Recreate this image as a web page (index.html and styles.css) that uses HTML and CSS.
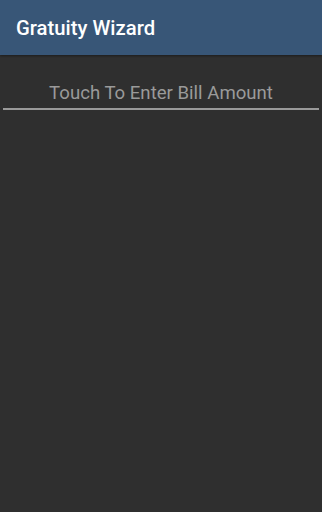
FILE: index.html
```html
<!DOCTYPE html>
<html>
<head>
<meta charset="utf-8">
<link rel="stylesheet" href="styles.css">
</head>
<body>
<header class="appbar"><h1 class="title">Gratuity Wizard</h1></header>
<main class="content">
  <div class="bill-field">Touch To Enter Bill Amount</div>
</main>
</body>
</html>
```
FILE: styles.css
```css
html, body { margin: 0; padding: 0; height: 100%; }
body { background: #2f2f2f; font-family: Roboto, "Noto Sans", sans-serif; }
.appbar {
  height: 55px;
  background: #385677;
  display: flex;
  align-items: center;
  padding-left: 16px;
  box-shadow: 0 1px 2px rgba(0,0,0,0.4);
}
.title { margin: 0; color: #ffffff; font-size: 20.3px; font-weight: 500; }
.content { padding: 25px 3px 0 3px; }
.bill-field {
  text-align: center;
  color: #9a9a9a;
  font-size: 18.6px;
  line-height: 27px;
  padding-bottom: 1px;
  border-bottom: 2px solid #9a9a9a;
}
```
